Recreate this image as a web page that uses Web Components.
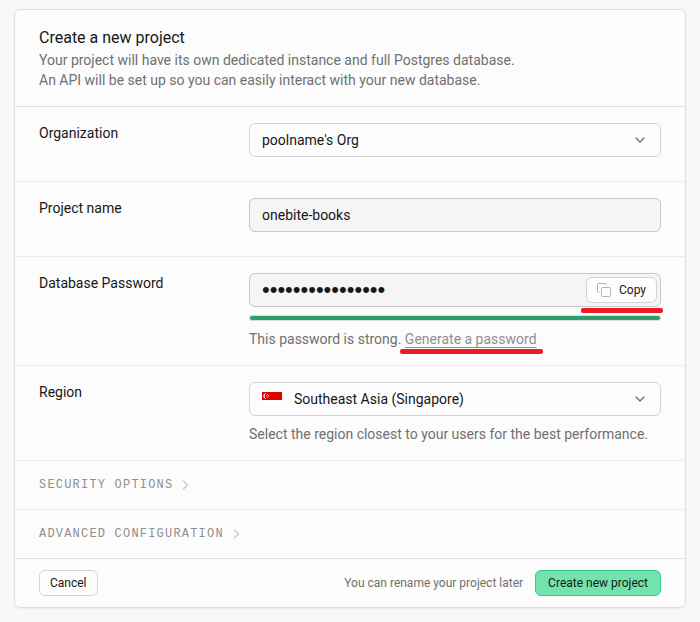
<!DOCTYPE html>
<html lang="en">
<head>
<meta charset="utf-8">
<meta name="viewport" content="width=device-width, initial-scale=1">
<title>Create a new project</title>
<style>
  body {
    margin: 0;
    padding: 9px 14px 14px;
    background: #f8f8f8;
    color: #171717;
    font: 14px/20px Roboto, "Liberation Sans", sans-serif;
    --text: #171717;
    --muted: #707070;
    --faint: #8f8f8f;
    --line: #dfdfdf;
    --line-soft: #ebebeb;
    --surface: #fcfcfc;
  }
</style>
</head>
<body>
<project-panel>
  <panel-heading slot="header" heading="Create a new project">
    Your project will have its own dedicated instance and full Postgres database.<br>
    An API will be set up so you can easily interact with your new database.
  </panel-heading>
  <select-field label="Organization" value="poolname's Org"></select-field>
  <text-field label="Project name" value="onebite-books"></text-field>
  <password-field label="Database Password" value="abcdefgh12345678">
    This password is strong.
    <marker-line><hint-link href="#generate">Generate a password</hint-link></marker-line>
  </password-field>
  <select-field label="Region" value="Southeast Asia (Singapore)" flag>Select the region closest to your users for the best performance.</select-field>
  <disclosure-row>Security options</disclosure-row>
  <disclosure-row>Advanced configuration</disclosure-row>
  <panel-footer slot="footer">
    <action-button>Cancel</action-button>
    <span slot="note">You can rename your project later</span>
    <action-button slot="end" primary>Create new project</action-button>
  </panel-footer>
</project-panel>

<script>
class Base extends HTMLElement {
  connectedCallback() {
    if (this.shadowRoot) return;
    this.attachShadow({ mode: 'open' }).innerHTML =
      `<style>*{box-sizing:border-box}${this.css()}</style>${this.html()}`;
  }
  attr(name) {
    return (this.getAttribute(name) || '').replace(/&/g, '&amp;').replace(/"/g, '&quot;').replace(/</g, '&lt;');
  }
}

customElements.define('project-panel', class extends Base {
  css() { return `
    :host { display: block; background: var(--surface); border: 1px solid var(--line);
      border-radius: 6px; box-shadow: 0 1px 2px rgba(0,0,0,.05); }
    header { border-bottom: 1px solid var(--line); }
    footer { border-top: 1px solid var(--line); }
    .rows { display: grid; row-gap: 1px; background: var(--line-soft); }
    ::slotted(:not([slot])) { background: var(--surface); }`; }
  html() { return `
    <header><slot name="header"></slot></header>
    <div class="rows"><slot></slot></div>
    <footer><slot name="footer"></slot></footer>`; }
});

customElements.define('panel-heading', class extends Base {
  css() { return `
    :host { display: block; padding: 16px 24px; }
    h1 { margin: 0; font-size: 16px; line-height: 24px; font-weight: 400; }
    p { margin: 0; color: var(--muted); }`; }
  html() { return `<h1>${this.attr('heading')}</h1><p><slot></slot></p>`; }
});

/* A label on the left, a control with an optional hint on the right. */
class Field extends Base {
  css() { return `
    :host { display: grid; grid-template-columns: 1fr 2fr; column-gap: 4px; padding: 16px 24px; }
    .control { display: flex; flex-direction: column; gap: 8px; min-width: 0; }
    .control::after { content: ""; }
    .hinted::after { display: none; }
    .hint { color: var(--muted); }
    .box { display: grid; grid-template-columns: 1fr auto; align-items: center; height: 34px;
      border: 1px solid #c7c7c7; border-radius: 6px; background: #f5f5f5; }
    input, select { width: 100%; min-width: 0; height: 32px; padding: 0 12px; border: 0; margin: 0;
      border-radius: 5px; background: none; color: var(--text); font: inherit; appearance: none; outline: 0; }
    .box:focus-within { border-color: #8f8f8f; }`; }
  html() {
    const hinted = this.textContent.trim() !== '';
    return `<label for="c">${this.attr('label')}</label>
      <div class="control${hinted ? ' hinted' : ''}">${this.control()}
        ${hinted ? '<div class="hint"><slot></slot></div>' : ''}</div>`;
  }
}

customElements.define('text-field', class extends Field {
  control() { return `<div class="box"><input id="c" type="text" value="${this.attr('value')}"></div>`; }
});

customElements.define('select-field', class extends Field {
  css() { return super.css() + `
    .box { grid-template-columns: 1fr; background: var(--surface); border-color: #d3d3d3; }
    .box > * { grid-area: 1 / 1; }
    .flagged select { padding-left: 44px; }
    svg { pointer-events: none; }
    .chevron { justify-self: end; margin-right: 12px; }
    .flag { margin-left: 12px; }`; }
  control() {
    const flag = this.hasAttribute('flag');
    return `<div class="box${flag ? ' flagged' : ''}">
      <select id="c"><option>${this.attr('value')}</option></select>
      ${flag ? `<svg class="flag" width="20" height="14" viewBox="0 0 20 14" aria-hidden="true">
        <path fill="#fff" d="M0 0h20v14H0z"/><path fill="#df0000" d="M0 0h20v8H0z"/>
        <path fill="#fff" d="M4.200 1.200a2.800 2.800 0 1 0 0 5.600a3.200 3.200 0 0 1 0-5.600z"/>
        <g fill="#fff"><circle cx="5.600" cy="2.200" r=".5"/><circle cx="4.500" cy="3.500" r=".5"/><circle cx="6.700" cy="3.500" r=".5"/><circle cx="5" cy="4.900" r=".5"/><circle cx="6.200" cy="4.900" r=".5"/></g></svg>` : ''}
      <svg class="chevron" width="16" height="16" viewBox="0 0 24 24" fill="none" stroke="#6f6f6f"
        stroke-width="2" stroke-linecap="round" stroke-linejoin="round" aria-hidden="true"><path d="m6 9 6 6 6-6"/></svg>
    </div>`;
  }
});

customElements.define('password-field', class extends Field {
  css() { return super.css() + `
    .box { padding-right: 3px; }
    input { font: 22px/24px "Liberation Sans", sans-serif; }
    .meter { height: 6px; border: 1px solid #dcdcdc; border-radius: 3px; background: #2f9e6c; }`; }
  control() { return `
    <div class="box"><input id="c" type="password" value="${this.attr('value')}">
      <marker-line wide><action-button icon>Copy</action-button></marker-line></div>
    <div class="meter" role="img" aria-label="Password strength"></div>`; }
});

customElements.define('action-button', class extends Base {
  css() { return `
    :host { display: block; flex: none; }
    button { display: flex; align-items: center; gap: 8px; height: 26px; padding: 0 10px; margin: 0;
      border: 1px solid #d3d3d3; border-radius: 6px; background: #fdfdfd; color: var(--text);
      font: inherit; font-size: 12px; line-height: 16px; cursor: pointer; }
    :host([primary]) button { padding: 0 12px; background: #72e3ad; border-color: #3ac98a; }`; }
  html() { return `<button type="button">${this.hasAttribute('icon') ? `
    <svg width="14" height="14" viewBox="0 0 14 14" fill="none" stroke="#b2b2b2" aria-hidden="true">
      <rect x="4.500" y="4.500" width="9" height="9" rx="1"/>
      <path d="M2.500 9.500h-1a1 1 0 0 1-1-1v-7a1 1 0 0 1 1-1h7a1 1 0 0 1 1 1v1"/></svg>` : ''}<slot></slot></button>`; }
});

customElements.define('hint-link', class extends Base {
  css() { return `a { color: var(--faint); text-decoration: underline; text-underline-offset: 3px; }`; }
  html() { return `<a href="${this.attr('href')}"><slot></slot></a>`; }
});

/* Highlights its content with a thick red stroke underneath. */
customElements.define('marker-line', class extends Base {
  css() { return `
    :host { display: inline-block; position: relative; }
    :host::after { content: ""; position: absolute; left: -5px; right: -6px; bottom: -5px;
      height: 5px; border-radius: 2px; background: #ed1c24; pointer-events: none; }
    :host([wide])::after { bottom: -10px; }`; }
  html() { return `<slot></slot>`; }
});

customElements.define('disclosure-row', class extends Base {
  css() { return `
    :host { display: block; }
    button { display: flex; align-items: center; gap: 4px; width: 100%; padding: 16px 24px; margin: 0; border: 0;
      background: none; color: var(--faint); font: 12px/16px "Liberation Mono", monospace;
      letter-spacing: .1em; text-transform: uppercase; cursor: pointer; }`; }
  html() { return `<button type="button" aria-expanded="false"><slot></slot>
    <svg width="16" height="16" viewBox="0 0 16 16" fill="none" stroke="#a0a0a0" aria-hidden="true"><path d="M6 3.500 10.500 8 6 12.500"/></svg></button>`; }
});

customElements.define('panel-footer', class extends Base {
  css() { return `
    :host { display: flex; align-items: center; justify-content: space-between; gap: 12px; padding: 11px 24px; }
    .end { display: flex; align-items: center; gap: 12px; color: var(--muted); font-size: 12px; line-height: 16px; }`; }
  html() { return `<slot></slot><div class="end"><slot name="note"></slot><slot name="end"></slot></div>`; }
});
</script>
</body>
</html>
